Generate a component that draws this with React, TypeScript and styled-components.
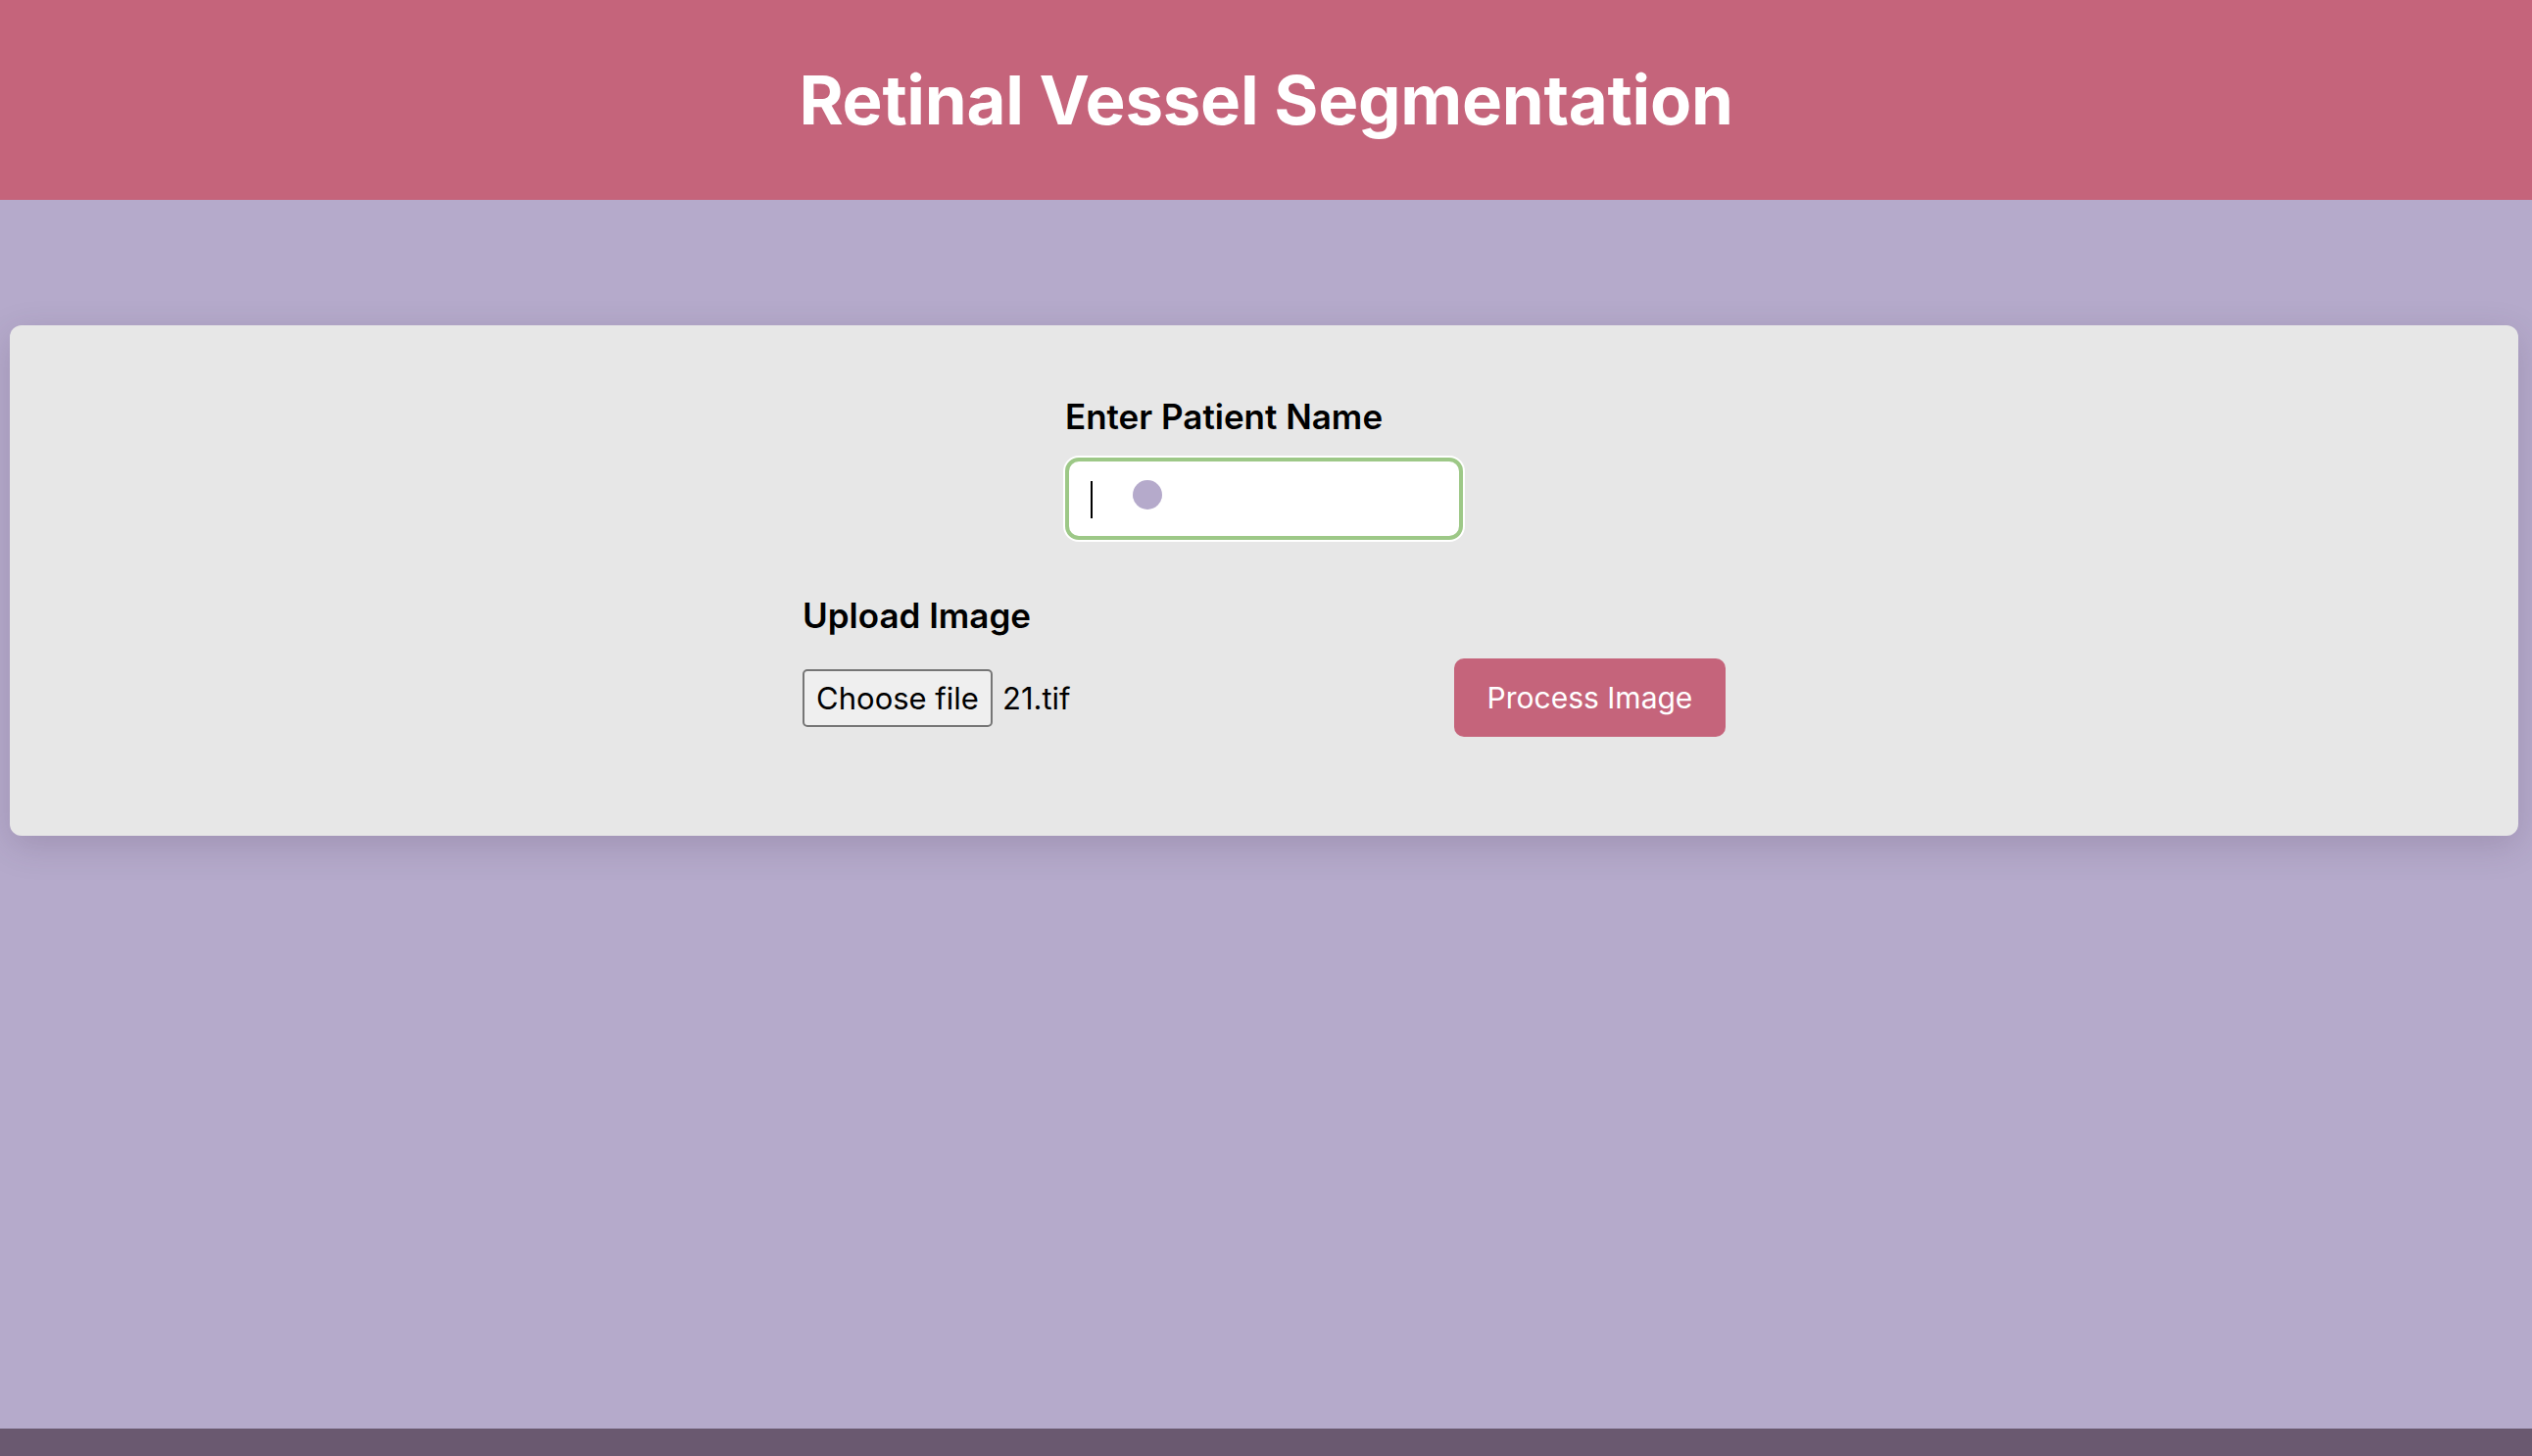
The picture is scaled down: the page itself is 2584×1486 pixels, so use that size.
import styled, { createGlobalStyle } from "styled-components";

const GlobalStyle = createGlobalStyle`
  html, body {
    margin: 0;
    padding: 0;
    background: #b5aacb;
    font-family: "Inter", "Liberation Sans", sans-serif;
  }
  * {
    box-sizing: border-box;
  }
`;

export default function App() {
  return (
    <>
      <GlobalStyle />
      <Page>
        <Header>
          <h1>Retinal Vessel Segmentation</h1>
        </Header>
        <Main>
          <Card>
            <NameField>
              <Label htmlFor="patient">Enter Patient Name</Label>
              <InputWrap>
                <NameInput id="patient" type="text" />
                <Caret />
                <Pointer />
              </InputWrap>
            </NameField>
            <UploadSection>
              <Label as="div">Upload Image</Label>
              <UploadRow>
                <FilePicker>
                  <ChooseButton>
                    Choose file
                    <input type="file" accept=".tif,.tiff,.png,.jpg" />
                  </ChooseButton>
                  <FileName>21.tif</FileName>
                </FilePicker>
                <ProcessButton>Process Image</ProcessButton>
              </UploadRow>
            </UploadSection>
          </Card>
        </Main>
        <Footer />
      </Page>
    </>
  );
}

const Page = styled.div`
  display: grid;
  grid-template-rows: 204px 1fr 28px;
  height: 100vh;
`;

const Header = styled.header`
  background: #c5647b;
  display: flex;
  align-items: center;
  justify-content: center;
  h1 {
    margin: 0;
    color: #fff;
    font-size: 69px;
    font-weight: 700;
    line-height: 1;
    letter-spacing: -0.3px;
  }
`;

const Main = styled.main`
  padding: 128px 14px 0 10px;
`;

const Card = styled.section`
  background: #e7e7e7;
  border-radius: 12px;
  box-shadow: 0 10px 36px rgba(60, 40, 70, 0.18);
  padding: 73px 0 101px;
  display: flex;
  flex-direction: column;
  align-items: center;
`;

const NameField = styled.div`
  width: 406px;
  display: flex;
  flex-direction: column;
  gap: 22px;
`;

const Label = styled.label`
  display: block;
  color: #000;
  font-size: 35px;
  font-weight: 600;
  line-height: 40px;
`;

const InputWrap = styled.div`
  position: relative;
  width: 406px;
  height: 84px;
`;

const NameInput = styled.input`
  width: 100%;
  height: 100%;
  border: 4px solid #9dc887;
  border-radius: 14px;
  background: #fff;
  box-shadow: 0 0 0 2px #fff;
  outline: none;
  padding: 0 22px;
  font-family: inherit;
  font-size: 32px;
  caret-color: transparent;
`;

const Caret = styled.span`
  position: absolute;
  left: 26px;
  top: 24px;
  width: 2px;
  height: 38px;
  background: #000;
  pointer-events: none;
`;

const Pointer = styled.span`
  position: absolute;
  left: 69px;
  top: 23px;
  width: 30px;
  height: 30px;
  border-radius: 50%;
  background: #b5aacb;
  pointer-events: none;
`;

const UploadSection = styled.div`
  width: 942px;
  margin-top: 57px;
  display: flex;
  flex-direction: column;
  gap: 24px;
`;

const UploadRow = styled.div`
  display: flex;
  align-items: center;
  justify-content: space-between;
`;

const FilePicker = styled.div`
  display: flex;
  align-items: center;
  gap: 10px;
`;

const ChooseButton = styled.label`
  display: inline-flex;
  align-items: center;
  justify-content: center;
  width: 194px;
  height: 59px;
  border: 2px solid #767676;
  border-radius: 5px;
  background: #efefef;
  color: #000;
  font-size: 31px;
  font-weight: 400;
  cursor: pointer;
  input {
    display: none;
  }
`;

const FileName = styled.span`
  color: #000;
  font-size: 31px;
`;

const ProcessButton = styled.button`
  width: 277px;
  height: 80px;
  border: none;
  border-radius: 10px;
  background: #c5647b;
  color: #fff;
  font-family: inherit;
  font-size: 30px;
  font-weight: 400;
  cursor: pointer;
`;

const Footer = styled.footer`
  background: #6a5970;
`;
